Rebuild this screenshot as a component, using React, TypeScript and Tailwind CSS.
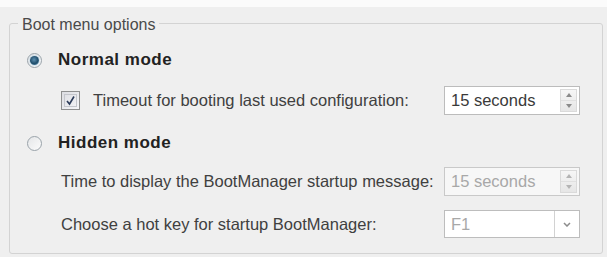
import React from 'react';

function Radio({ checked }: { checked?: boolean }) {
  return (
    <div className="w-[15px] h-[15px] rounded-full border border-[#9aa3aa] bg-gradient-to-br from-[#e4e6e8] to-[#fbfbfb] flex items-center justify-center shrink-0">
      {checked && (
        <div className="w-[9px] h-[9px] rounded-full bg-[radial-gradient(circle_at_45%_40%,#5d8fb0_0%,#1f4d6b_55%,#6aa6c8_100%)] shadow-[0_0_2px_#7fb3d6]" />
      )}
    </div>
  );
}

function Checkbox() {
  return (
    <div className="w-[19px] h-[19px] border border-[#8e8f8f] bg-gradient-to-br from-[#dcdde2] to-[#f6f6f8] p-[2px] shrink-0">
      <div className="w-full h-full border border-[#c4c6cc] flex items-center justify-center">
        <svg width="11" height="11" viewBox="0 0 11 11">
          <path d="M2 6 L4.5 9 L9 1.5" fill="none" stroke="#2c3c5a" strokeWidth="1.6" />
        </svg>
      </div>
    </div>
  );
}

function Spin({ disabled }: { disabled?: boolean }) {
  const arrow = disabled ? '#b4b4b4' : '#8a8a8a';
  return (
    <div
      className={`w-[136px] h-[29px] border flex items-stretch shrink-0 ${
        disabled ? 'border-[#c9c9c9] bg-[#f7f7f7] text-[#a8a8a8]' : 'border-[#bcbcbc] bg-white text-[#3a3a3a]'
      }`}
    >
      <div className="flex-1 flex items-center pl-[6px]">15 seconds</div>
      <div className="w-[17px] my-[2px] mr-[2px] flex flex-col border border-[#dadada] bg-gradient-to-b from-[#f6f6f6] to-[#e6e6e6]">
        <div className="flex-1 flex items-center justify-center">
          <svg width="6" height="4" viewBox="0 0 6 4">
            <path d="M0 4 L3 0 L6 4 Z" fill={arrow} />
          </svg>
        </div>
        <div className="flex-1 flex items-center justify-center border-t border-[#e0e0e0]">
          <svg width="6" height="4" viewBox="0 0 6 4">
            <path d="M0 0 L3 4 L6 0 Z" fill={arrow} />
          </svg>
        </div>
      </div>
    </div>
  );
}

function Combo() {
  return (
    <div className="w-[136px] h-[28px] border border-[#bdbdbd] bg-white flex items-stretch shrink-0 text-[#a8a8a8]">
      <div className="flex-1 flex items-center pl-[6px]">F1</div>
      <div className="w-[25px] border-l border-[#d2d2d2] flex items-center justify-center">
        <svg width="8" height="5" viewBox="0 0 8 5">
          <path d="M1 1 L4 4 L7 1" fill="none" stroke="#8c8c8c" strokeWidth="1.5" />
        </svg>
      </div>
    </div>
  );
}

export default function App() {
  return (
    <div className="w-[607px] h-[257px] bg-[#efefef] flex flex-col font-['Liberation_Sans',Arial,sans-serif] text-[16.5px] text-[#404040] overflow-hidden">
      <div className="h-[7px] bg-[#fbfbfb]" />
      {/* Group box */}
      <div className="ml-[9px] mr-[4px] mt-[16px] h-[231px] border border-[#d3d3d3] rounded-[3px] flex flex-col">
        <div className="-mt-[8px] ml-[8px] px-[4px] w-fit bg-[#efefef] leading-[18px] text-[16px] text-[#4a4a4a]">
          Boot menu options
        </div>

        {/* Normal mode */}
        <div className="mt-[12px] h-[28px] pl-[17px] flex items-center gap-[16px]">
          <Radio checked />
          <span className="font-bold text-[17px] tracking-[0.5px] text-[#222]">Normal mode</span>
        </div>
        <div className="mt-[12px] h-[29px] pl-[51px] flex items-center">
          <Checkbox />
          <span className="ml-[13px] w-[351px]">Timeout for booting last used configuration:</span>
          <Spin />
        </div>

        {/* Hidden mode */}
        <div className="mt-[14px] h-[28px] pl-[17px] flex items-center gap-[16px]">
          <Radio />
          <span className="font-bold text-[17px] tracking-[0.5px] text-[#222]">Hidden mode</span>
        </div>
        <div className="mt-[10px] h-[29px] pl-[51px] flex items-center">
          <span className="w-[383px]">Time to display the BootManager startup message:</span>
          <Spin disabled />
        </div>
        <div className="mt-[14px] h-[28px] pl-[51px] flex items-center">
          <span className="w-[383px]">Choose a hot key for startup BootManager:</span>
          <Combo />
        </div>
      </div>
    </div>
  );
}
